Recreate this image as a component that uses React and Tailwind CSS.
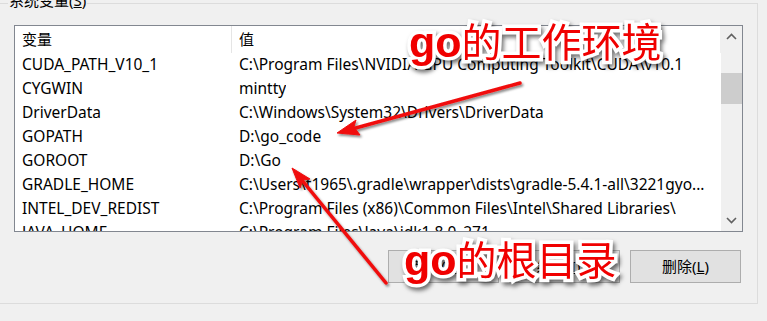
import React from 'react'

const rows = [
  ['CUDA_PATH_V10_1', 'C:\\Program Files\\NVIDIA GPU Computing Toolkit\\CUDA\\v10.1'],
  ['CYGWIN', 'mintty'],
  ['DriverData', 'C:\\Windows\\System32\\Drivers\\DriverData'],
  ['GOPATH', 'D:\\go_code'],
  ['GOROOT', 'D:\\Go'],
  ['GRADLE_HOME', 'C:\\Users\\t1965\\.gradle\\wrapper\\dists\\gradle-5.4.1-all\\3221gyo...'],
  ['INTEL_DEV_REDIST', 'C:\\Program Files (x86)\\Common Files\\Intel\\Shared Libraries\\'],
  ['JAVA_HOME', 'C:\\Program Files\\Java\\jdk1.8.0_271'],
]

const Chevron = ({ up }) => (
  <svg width="11" height="7" viewBox="0 0 11 7" fill="none" stroke="#606060" strokeWidth="1.6">
    {up ? <path d="M1 6 L5.5 1.5 L10 6" /> : <path d="M1 1 L5.5 5.5 L10 1" />}
  </svg>
)

const Button = ({ children }) => (
  <div className="w-[111px] h-[33px] border border-[#adadad] bg-[#e1e1e1] flex items-center justify-center text-[15px] text-black">
    {children}
  </div>
)

const Note = ({ cjk, className }) => (
  <div className={`absolute leading-none whitespace-nowrap text-[#f00000] [-webkit-text-stroke:7px_#ffffff] [paint-order:stroke_fill] [filter:drop-shadow(2px_3px_2px_rgba(0,0,0,0.55))] ${className}`}>
    <span className="font-bold text-[43px] font-['Liberation_Sans',sans-serif]">go</span>
    <span className="text-[40px] font-['Noto_Sans_CJK_SC',sans-serif]">{cjk}</span>
  </div>
)

export default function App() {
  return (
    <div className="relative w-[767px] h-[321px] overflow-hidden bg-[#f0f0f0] font-['Noto_Sans','Noto_Sans_CJK_SC',sans-serif] text-black">
      <div className="relative ml-[-2px] mt-[3px] w-[760px] h-[301px] border border-[#dcdcdc] pl-[15px] pt-[21px]">
        <div className="absolute left-[9px] top-[-14px] px-[1px] bg-[#f0f0f0] text-[15px] leading-[20px]">
          系统变量(<span className="underline">S</span>)
        </div>

        <div className="w-[729px] h-[207px] border border-[#828790] bg-white flex">
          <div className="w-[706px] overflow-hidden">
            <div className="h-[27px] flex items-center text-[15px] border-r border-[#f0f0f0]">
              <div className="w-[217px] pl-[7px] h-full flex items-center border-r border-[#e5e5e5]">变量</div>
              <div className="pl-[7px]">值</div>
            </div>
            {rows.map(([k, v]) => (
              <div key={k} className="h-[24px] flex items-center text-[15.5px] whitespace-nowrap">
                <div className="w-[217px] pl-[7px] shrink-0">{k}</div>
                <div className="pl-[7px] overflow-hidden">{v}</div>
              </div>
            ))}
          </div>
          <div className="w-[21px] bg-[#f0f0f0] flex flex-col">
            <div className="h-[21px] flex items-center justify-center"><Chevron up /></div>
            <div className="h-[26px]" />
            <div className="h-[31px] bg-[#cdcdcd]" />
            <div className="flex-1" />
            <div className="h-[21px] flex items-center justify-center"><Chevron /></div>
          </div>
        </div>

        <div className="mt-[18px] ml-[374px] flex gap-[10px]">
          <Button>新建(<span className="underline">W</span>)...</Button>
          <Button>编辑(<span className="underline">I</span>)...</Button>
          <Button>删除(<span className="underline">L</span>)</Button>
        </div>
      </div>

      <svg className="absolute left-0 top-0" width="767" height="321" viewBox="0 0 767 321">
        <defs>
          <filter id="sh" x="-20%" y="-20%" width="140%" height="140%">
            <feDropShadow dx="1.5" dy="2" stdDeviation="1.2" floodColor="#000" floodOpacity="0.45" />
          </filter>
        </defs>
        <g filter="url(#sh)" fill="#f01010" stroke="#f01010">
          <line x1="520" y1="83" x2="352" y2="129" strokeWidth="3.5" strokeLinecap="round" />
          <path d="M337 133 L356 120 L354 127 L360 135 Z" strokeWidth="1" />
          <line x1="386" y1="283" x2="301" y2="179" strokeWidth="3.5" strokeLinecap="round" />
          <path d="M292 168 L310 179 L303 180 L300 188 Z" strokeWidth="1" />
        </g>
      </svg>

      <Note cjk="的工作环境" className="left-[409px] top-[20px]" />
      <Note cjk="的根目录" className="left-[404px] top-[238px]" />
    </div>
  )
}
